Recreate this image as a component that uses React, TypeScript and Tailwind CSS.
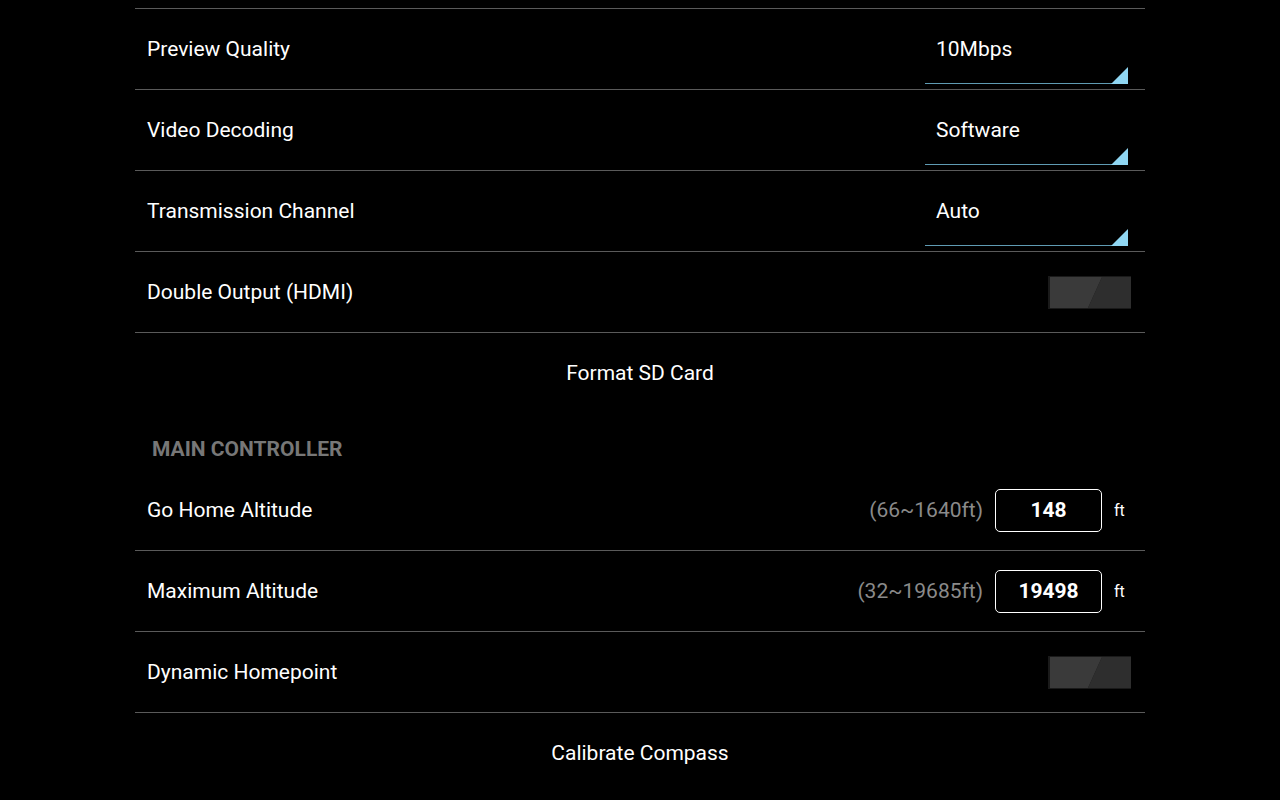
const font = { fontFamily: "Roboto, 'Noto Sans', sans-serif" };

function Dropdown({ value }: { value: string }) {
  return (
    <div className="relative w-[203px] h-[80px] mr-[17px]">
      <span className="absolute left-[11px] top-[26px] text-[21px] leading-[28px] text-white">{value}</span>
      <div className="absolute left-0 right-[1px] bottom-[5px] h-[1px] bg-[#5f9bb3]" />
      <svg className="absolute right-0 bottom-[5px]" width="17" height="17" viewBox="0 0 17 17">
        <polygon points="17,0 17,17 0,17" fill="#8fd6f2" />
      </svg>
    </div>
  );
}

function Toggle() {
  return (
    <div className="relative w-[83px] h-[33px] mr-[14px] bg-[#1a1a1a]">
      <svg className="absolute left-[2px] top-[1px]" width="81" height="31" viewBox="0 0 81 31">
        <polygon points="0,0 52,0 38,31 0,31" fill="#3a3a3a" />
        <polygon points="52,0 81,0 81,31 38,31" fill="#2e2e2e" />
      </svg>
    </div>
  );
}

function Row({ label, children }: { label: string; children?: React.ReactNode }) {
  return (
    <div className="flex items-center justify-between h-[81px] border-b border-[#5a5a5a]">
      <span className="pl-3 pt-[2px] text-[21px] text-white">{label}</span>
      {children}
    </div>
  );
}

function NumberInput({ range, value }: { range: string; value: string }) {
  return (
    <div className="flex items-center">
      <span className="pt-[2px] text-[21px] text-[#8a8a8a]">{range}</span>
      <div className="ml-3 w-[107px] h-[43px] pt-[2px] rounded-[5px] border border-white flex items-center justify-center text-[21px] font-bold text-white">
        {value}
      </div>
      <span className="ml-3 w-[31px] pt-[2px] text-[16px] text-white">ft</span>
    </div>
  );
}

export default function App() {
  const dropdowns = [
    { label: "Preview Quality", value: "10Mbps" },
    { label: "Video Decoding", value: "Software" },
    { label: "Transmission Channel", value: "Auto" },
  ];

  return (
    <div className="w-[1280px] h-[800px] bg-black overflow-hidden" style={font}>
      <div className="w-[1010px] mx-auto">
        <div className="h-[9px] border-b border-[#5a5a5a]" />
        {dropdowns.map((d) => (
          <Row key={d.label} label={d.label}>
            <Dropdown value={d.value} />
          </Row>
        ))}
        <Row label="Double Output (HDMI)">
          <Toggle />
        </Row>
        <div className="h-[80px] pt-[2px] flex items-center justify-center text-[21px] text-white">Format SD Card</div>

        {/* main controller */}
        <div className="h-[57px] pl-[17px] pt-[22px] text-[21px] font-bold leading-[28px] text-[#777777]">MAIN CONTROLLER</div>
        <Row label="Go Home Altitude">
          <NumberInput range="(66~1640ft)" value="148" />
        </Row>
        <Row label="Maximum Altitude">
          <NumberInput range="(32~19685ft)" value="19498" />
        </Row>
        <Row label="Dynamic Homepoint">
          <Toggle />
        </Row>
        <div className="h-[80px] pt-[2px] flex items-center justify-center text-[21px] text-white">Calibrate Compass</div>
      </div>
    </div>
  );
}
